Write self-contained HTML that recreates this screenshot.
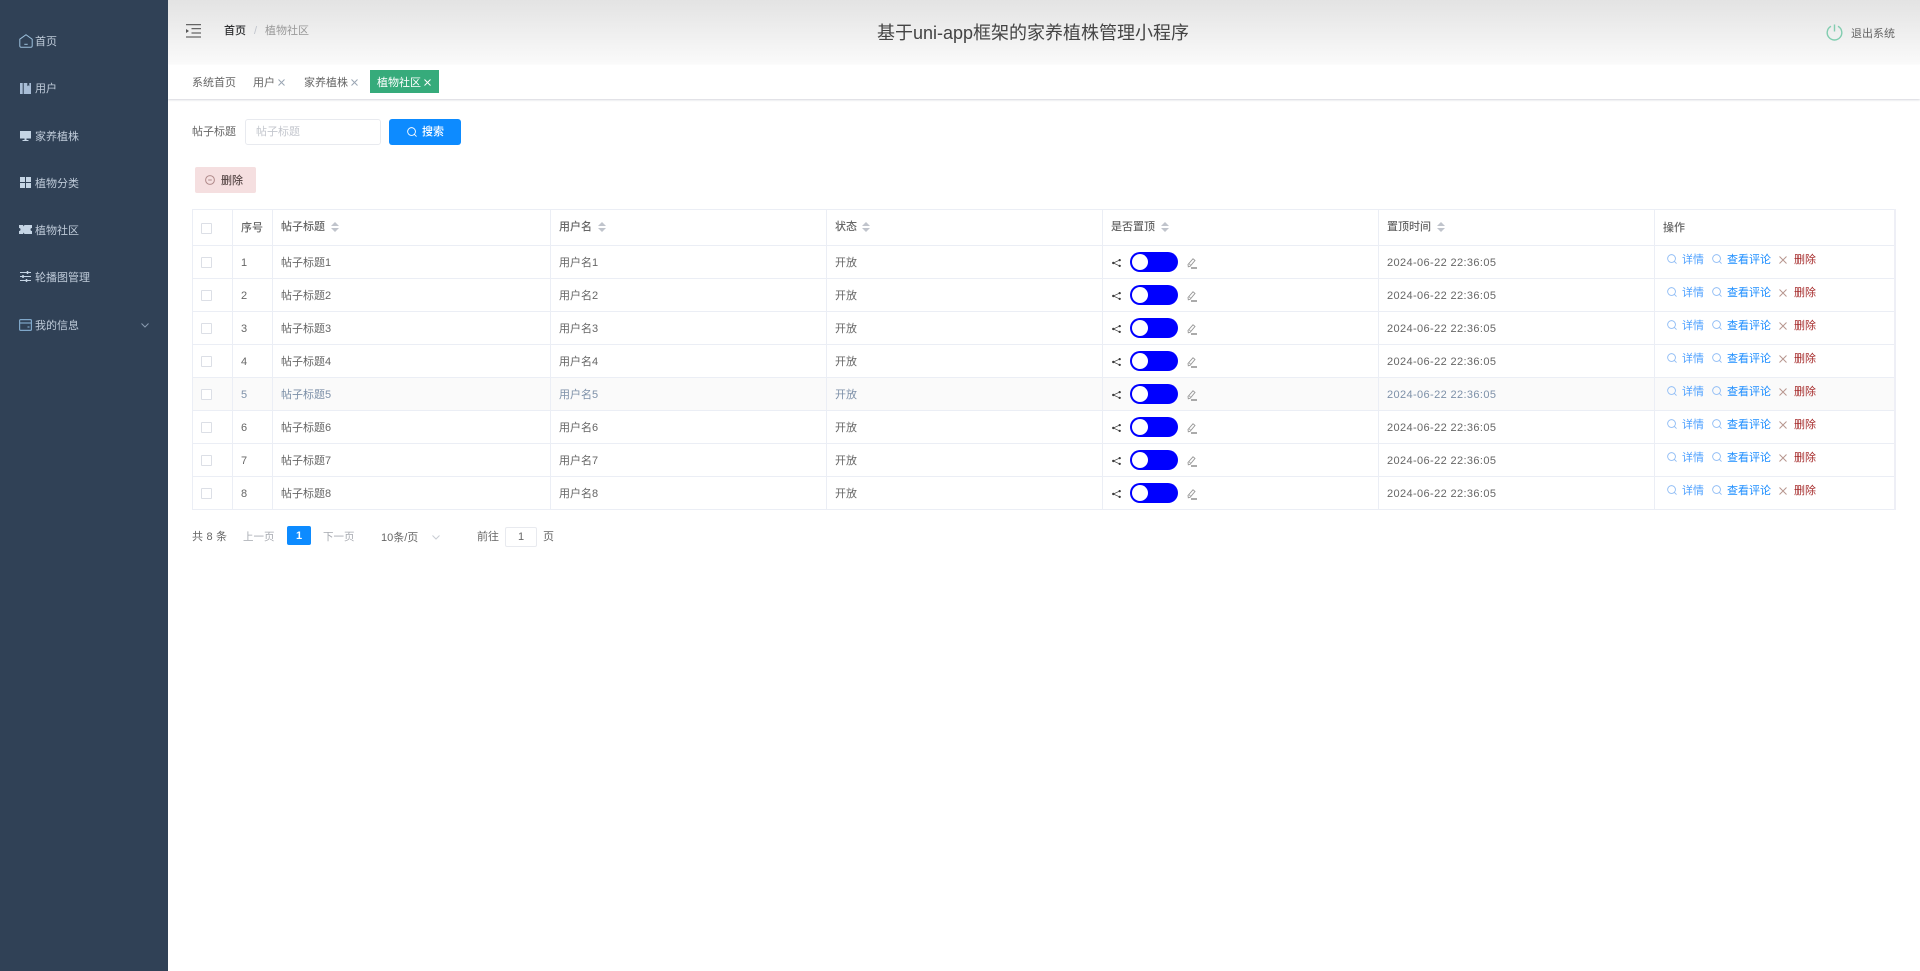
<!DOCTYPE html>
<html lang="zh-CN">
<head>
<meta charset="utf-8">
<title>基于uni-app框架的家养植株管理小程序</title>
<style>
*{box-sizing:border-box;margin:0;padding:0}
html,body{width:1920px;height:971px;overflow:hidden;background:#fff}
body{font-family:"Liberation Sans","Noto Sans CJK SC",sans-serif;font-size:11px;color:#666;position:relative}
.a{position:absolute;white-space:nowrap;line-height:14px}
svg{position:absolute;display:block}
#side{position:absolute;left:0;top:0;width:168px;height:971px;background:#304156}
#side .a{left:35px;color:#bfcbd9}
#head{position:absolute;left:168px;top:0;width:1752px;height:64px;background:linear-gradient(#e3e3e3,#fafafa)}
#tags{position:absolute;left:168px;top:65px;width:1752px;height:34px;background:#fff;box-shadow:0 1px 2px rgba(40,50,80,.2)}
.tb{position:absolute;background:#fff}
.hl{position:absolute;left:192px;width:1704px;height:1px;background:#ebeef5}
.vl{position:absolute;top:209px;width:1px;height:301px;background:#ebeef5}
.cb{position:absolute;left:201px;width:11px;height:11px;border:1px solid #dcdfe6;border-radius:1px;background:#fff}
.sw{position:absolute;left:1130px;top:7px;width:48px;height:20px;border-radius:10px;background:#0000ff}
.sw i{position:absolute;left:2px;top:2px;width:16px;height:16px;border-radius:50%;background:#fff}
.th{font-weight:500;color:#666}
.b1{color:#4da0ff}
.b2{color:#1a8cff}
.br{color:#a52a2a}
.r{position:absolute;left:0;width:1920px;height:33px}
.r5 .c{color:#7d90a8}
.d{letter-spacing:.38px}
</style>
</head>
<body>
<svg width="0" height="0" style="left:0;top:0">
<symbol id="sh" viewBox="0 0 9 8"><g fill="#333"><circle cx="1.300" cy="4" r="1.200"/><circle cx="7.700" cy="1.100" r="1.100"/><circle cx="7.700" cy="6.900" r="1.100"/></g><path d="M7.700 1.100 1.300 4l6.400 2.900" fill="none" stroke="#444" stroke-width=".7"/></symbol>
<symbol id="ed" viewBox="0 0 10 11"><path d="M1.300 8.800 1 6.500 6 .8l2 1.600-4.800 5.800z" fill="none" stroke="#999" stroke-width=".9"/><path d="M3.500 7 2 5.700" fill="none" stroke="#999" stroke-width=".7"/><path d="M4 10h6" fill="none" stroke="#444" stroke-width=".9"/></symbol>
<symbol id="se" viewBox="0 0 11 11"><circle cx="5" cy="5" r="4.300" fill="none" stroke="#8fbcf5" stroke-width="1"/><path d="M8 8l2.500 2.500" fill="none" stroke="#8fbcf5" stroke-width="1"/></symbol>
<symbol id="xx" viewBox="0 0 8 8"><path d="M.5.500l7 7M7.500.500l-7 7" fill="none" stroke="#b8968f"/></symbol>
<symbol id="so" viewBox="0 0 8 10"><path d="M4 0l4 4H0zM0 6h8l-4 4z" fill="#c0c4cc"/></symbol>
</svg>

<div id="side">
<svg style="left:19px;top:34px" width="14" height="14" viewBox="0 0 14 14" fill="none" stroke="#9cc0dc" stroke-width="1"><path d="M.8 5.200 7 .7l6.200 4.500V12a1.200 1.200 0 0 1-1.200 1.200H2A1.200 1.200 0 0 1 .8 12z"/><path d="M5.300 10.300h3.400"/></svg>
<div class="a" style="top:35px">首页</div>
<svg style="left:20px;top:83px" width="11" height="11" viewBox="0 0 11 11" fill="#a8bdd6"><path d="M0 0h2.700v11H0zM3.700 0h3.600v3.200l1-.9 1 .9V0H11v11H3.700z"/></svg>
<div class="a" style="top:82px">用户</div>
<svg style="left:20px;top:131px" width="11" height="10" viewBox="0 0 11 10" fill="#c5d5e5"><path d="M0 0h11v7.500H0zM4.500 7.500h2V9H8.500v1h-6V9h2z"/></svg>
<div class="a" style="top:130px">家养植株</div>
<svg style="left:20px;top:177px" width="11" height="11" viewBox="0 0 11 11" fill="#c5d5e5"><rect width="5" height="5"/><rect x="6" width="5" height="5"/><rect y="6" width="5" height="5"/><rect x="6" y="6" width="5" height="5"/></svg>
<div class="a" style="top:177px">植物分类</div>
<svg style="left:19px;top:225px" width="13" height="9" viewBox="0 0 13 9" fill="#c5d5e5"><path d="M0 0h4l.7 1.500L5.400 0H13v3a1.500 1.500 0 0 0 0 3v3H5.400l-.7-1.500L4 9H0V6a1.500 1.500 0 0 0 0-3z"/></svg>
<div class="a" style="top:224px">植物社区</div>
<svg style="left:20px;top:271px" width="11" height="11" viewBox="0 0 11 11" fill="none" stroke="#c5d5e5" stroke-width="1"><path d="M0 1.500h11M0 5.500h11M0 9.500h11"/><path d="M7.500 0v3M3 4v3M6.500 8v3" stroke-width="1.500"/></svg>
<div class="a" style="top:271px">轮播图管理</div>
<svg style="left:19px;top:319px" width="13" height="12" viewBox="0 0 13 12" fill="none" stroke="#7fa7c9" stroke-width="1.200"><rect x=".6" y=".6" width="11.800" height="10.800" rx="1"/><path d="M.6 4h11.800"/><path d="M8.500 8h2"/></svg>
<div class="a" style="top:319px">我的信息</div>
<svg style="left:141px;top:323px" width="8" height="5" viewBox="0 0 8 5" fill="none" stroke="#8a9bb0" stroke-width="1"><path d="M.5.500 4 4 7.500.500"/></svg>
</div>

<div id="head"></div>
<svg style="left:186px;top:24px" width="15" height="14" viewBox="0 0 15 14" fill="none" stroke="#666" stroke-width="1.200"><path d="M0 .6h15M5.500 4.600H15M5.500 9H15M0 13h15"/><path d="M0 5v4l3-2z" fill="#555" stroke="none"/></svg>
<div class="a" style="left:224px;top:24px;font-weight:500;color:#303133">首页</div>
<div class="a" style="left:254px;top:24px;color:#c0c4cc">/</div>
<div class="a" style="left:265px;top:24px;color:#999">植物社区</div>
<div class="a" style="left:877px;top:21px;font-size:18px;line-height:24px;color:#444">基于uni-app框架的家养植株管理小程序</div>
<svg style="left:1826px;top:24px" width="17" height="17" viewBox="0 0 17 17" fill="none" stroke="#82cdb0" stroke-width="1.400"><path d="M5 2.300a7.300 7.300 0 1 0 7 0"/><path d="M8.500.5v7"/></svg>
<div class="a" style="left:1851px;top:27px;color:#666">退出系统</div>

<div id="tags"></div>
<div class="a" style="left:192px;top:76px;color:#666">系统首页</div>
<div class="a" style="left:253px;top:76px;color:#666">用户</div>
<svg style="left:278px;top:79px" width="7" height="7" viewBox="0 0 7 7" stroke="#9aa5b3" fill="none"><path d="M.5.500l6 6M6.500.500l-6 6"/></svg>
<div class="a" style="left:304px;top:76px;color:#666">家养植株</div>
<svg style="left:351px;top:79px" width="7" height="7" viewBox="0 0 7 7" stroke="#9aa5b3" fill="none"><path d="M.5.500l6 6M6.500.500l-6 6"/></svg>
<div class="tb" style="left:370px;top:70px;width:69px;height:23px;background:#36ab7b"></div>
<div class="a" style="left:377px;top:76px;color:#fff">植物社区</div>
<svg style="left:424px;top:79px" width="7" height="7" viewBox="0 0 7 7" stroke="#fff" fill="none"><path d="M.5.500l6 6M6.500.500l-6 6"/></svg>

<div class="a" style="left:192px;top:125px">帖子标题</div>
<div class="tb" style="left:245px;top:119px;width:136px;height:26px;border:1px solid #e8eaef;border-radius:3px"></div>
<div class="a" style="left:256px;top:125px;color:#c4c7ce">帖子标题</div>
<div class="tb" style="left:389px;top:119px;width:72px;height:26px;background:#0d8bff;border-radius:3px"></div>
<svg style="left:407px;top:127px" width="10" height="10" viewBox="0 0 11 11" fill="none" stroke="#fff"><circle cx="5" cy="5" r="4.300"/><path d="M8 8l2.500 2.500"/></svg>
<div class="a" style="left:422px;top:125px;color:#fff;font-weight:500">搜索</div>

<div class="tb" style="left:195px;top:167px;width:61px;height:26px;background:#f5dfe0;border-radius:2px"></div>
<svg style="left:205px;top:175px" width="10" height="10" viewBox="0 0 10 10" fill="none" stroke="#b08a8a"><circle cx="5" cy="5" r="4.400"/><path d="M3.200 5h3.600"/></svg>
<div class="a" style="left:221px;top:174px;color:#5a4a4a;font-weight:500">删除</div>

<!-- table -->
<div class="tb" style="left:193px;top:378px;width:1701px;height:32px;background:#fafafa"></div>
<div class="hl" style="top:209px"></div><div class="hl" style="top:245px"></div><div class="hl" style="top:278px"></div><div class="hl" style="top:311px"></div><div class="hl" style="top:344px"></div><div class="hl" style="top:377px"></div><div class="hl" style="top:410px"></div><div class="hl" style="top:443px"></div><div class="hl" style="top:476px"></div><div class="hl" style="top:509px"></div>
<div class="vl" style="left:192px"></div><div class="vl" style="left:232px"></div><div class="vl" style="left:272px"></div><div class="vl" style="left:550px"></div><div class="vl" style="left:826px"></div><div class="vl" style="left:1102px"></div><div class="vl" style="left:1378px"></div><div class="vl" style="left:1654px"></div><div class="vl" style="left:1894px;width:2px;background:#eeeff6"></div>

<div class="cb" style="top:223px"></div>
<div class="a th" style="left:241px;top:221px">序号</div>
<div class="a th" style="left:281px;top:220px">帖子标题</div>
<svg style="left:331px;top:222px" width="8" height="10"><use href="#so"/></svg>
<div class="a th" style="left:559px;top:220px">用户名</div>
<svg style="left:598px;top:222px" width="8" height="10"><use href="#so"/></svg>
<div class="a th" style="left:835px;top:220px">状态</div>
<svg style="left:862px;top:222px" width="8" height="10"><use href="#so"/></svg>
<div class="a th" style="left:1111px;top:220px">是否置顶</div>
<svg style="left:1161px;top:222px" width="8" height="10"><use href="#so"/></svg>
<div class="a th" style="left:1387px;top:220px">置顶时间</div>
<svg style="left:1437px;top:222px" width="8" height="10"><use href="#so"/></svg>
<div class="a th" style="left:1663px;top:221px">操作</div>

<div class="r" style="top:245px"><div class="cb" style="top:12px"></div><div class="a c" style="left:241px;top:11px">1</div><div class="a c" style="left:281px;top:11px">帖子标题1</div><div class="a c" style="left:559px;top:11px">用户名1</div><div class="a c" style="left:835px;top:11px">开放</div><svg style="left:1112px;top:14px" width="9" height="8"><use href="#sh"/></svg><div class="sw"><i></i></div><svg style="left:1187px;top:13px" width="10" height="11"><use href="#ed"/></svg><div class="a c d" style="left:1387px;top:11px">2024-06-22 22:36:05</div><svg style="left:1667px;top:9px" width="10" height="10"><use href="#se"/></svg><div class="a b1" style="left:1682px;top:8px">详情</div><svg style="left:1712px;top:9px" width="10" height="10"><use href="#se"/></svg><div class="a b2" style="left:1727px;top:8px">查看评论</div><svg style="left:1779px;top:11px" width="8" height="8"><use href="#xx"/></svg><div class="a br" style="left:1794px;top:8px">删除</div></div>

<div class="r" style="top:278px"><div class="cb" style="top:12px"></div><div class="a c" style="left:241px;top:11px">2</div><div class="a c" style="left:281px;top:11px">帖子标题2</div><div class="a c" style="left:559px;top:11px">用户名2</div><div class="a c" style="left:835px;top:11px">开放</div><svg style="left:1112px;top:14px" width="9" height="8"><use href="#sh"/></svg><div class="sw"><i></i></div><svg style="left:1187px;top:13px" width="10" height="11"><use href="#ed"/></svg><div class="a c d" style="left:1387px;top:11px">2024-06-22 22:36:05</div><svg style="left:1667px;top:9px" width="10" height="10"><use href="#se"/></svg><div class="a b1" style="left:1682px;top:8px">详情</div><svg style="left:1712px;top:9px" width="10" height="10"><use href="#se"/></svg><div class="a b2" style="left:1727px;top:8px">查看评论</div><svg style="left:1779px;top:11px" width="8" height="8"><use href="#xx"/></svg><div class="a br" style="left:1794px;top:8px">删除</div></div>

<div class="r" style="top:311px"><div class="cb" style="top:12px"></div><div class="a c" style="left:241px;top:11px">3</div><div class="a c" style="left:281px;top:11px">帖子标题3</div><div class="a c" style="left:559px;top:11px">用户名3</div><div class="a c" style="left:835px;top:11px">开放</div><svg style="left:1112px;top:14px" width="9" height="8"><use href="#sh"/></svg><div class="sw"><i></i></div><svg style="left:1187px;top:13px" width="10" height="11"><use href="#ed"/></svg><div class="a c d" style="left:1387px;top:11px">2024-06-22 22:36:05</div><svg style="left:1667px;top:9px" width="10" height="10"><use href="#se"/></svg><div class="a b1" style="left:1682px;top:8px">详情</div><svg style="left:1712px;top:9px" width="10" height="10"><use href="#se"/></svg><div class="a b2" style="left:1727px;top:8px">查看评论</div><svg style="left:1779px;top:11px" width="8" height="8"><use href="#xx"/></svg><div class="a br" style="left:1794px;top:8px">删除</div></div>

<div class="r" style="top:344px"><div class="cb" style="top:12px"></div><div class="a c" style="left:241px;top:11px">4</div><div class="a c" style="left:281px;top:11px">帖子标题4</div><div class="a c" style="left:559px;top:11px">用户名4</div><div class="a c" style="left:835px;top:11px">开放</div><svg style="left:1112px;top:14px" width="9" height="8"><use href="#sh"/></svg><div class="sw"><i></i></div><svg style="left:1187px;top:13px" width="10" height="11"><use href="#ed"/></svg><div class="a c d" style="left:1387px;top:11px">2024-06-22 22:36:05</div><svg style="left:1667px;top:9px" width="10" height="10"><use href="#se"/></svg><div class="a b1" style="left:1682px;top:8px">详情</div><svg style="left:1712px;top:9px" width="10" height="10"><use href="#se"/></svg><div class="a b2" style="left:1727px;top:8px">查看评论</div><svg style="left:1779px;top:11px" width="8" height="8"><use href="#xx"/></svg><div class="a br" style="left:1794px;top:8px">删除</div></div>

<div class="r r5" style="top:377px"><div class="cb" style="top:12px"></div><div class="a c" style="left:241px;top:11px">5</div><div class="a c" style="left:281px;top:11px">帖子标题5</div><div class="a c" style="left:559px;top:11px">用户名5</div><div class="a c" style="left:835px;top:11px">开放</div><svg style="left:1112px;top:14px" width="9" height="8"><use href="#sh"/></svg><div class="sw"><i></i></div><svg style="left:1187px;top:13px" width="10" height="11"><use href="#ed"/></svg><div class="a c d" style="left:1387px;top:11px">2024-06-22 22:36:05</div><svg style="left:1667px;top:9px" width="10" height="10"><use href="#se"/></svg><div class="a b1" style="left:1682px;top:8px">详情</div><svg style="left:1712px;top:9px" width="10" height="10"><use href="#se"/></svg><div class="a b2" style="left:1727px;top:8px">查看评论</div><svg style="left:1779px;top:11px" width="8" height="8"><use href="#xx"/></svg><div class="a br" style="left:1794px;top:8px">删除</div></div>

<div class="r" style="top:410px"><div class="cb" style="top:12px"></div><div class="a c" style="left:241px;top:11px">6</div><div class="a c" style="left:281px;top:11px">帖子标题6</div><div class="a c" style="left:559px;top:11px">用户名6</div><div class="a c" style="left:835px;top:11px">开放</div><svg style="left:1112px;top:14px" width="9" height="8"><use href="#sh"/></svg><div class="sw"><i></i></div><svg style="left:1187px;top:13px" width="10" height="11"><use href="#ed"/></svg><div class="a c d" style="left:1387px;top:11px">2024-06-22 22:36:05</div><svg style="left:1667px;top:9px" width="10" height="10"><use href="#se"/></svg><div class="a b1" style="left:1682px;top:8px">详情</div><svg style="left:1712px;top:9px" width="10" height="10"><use href="#se"/></svg><div class="a b2" style="left:1727px;top:8px">查看评论</div><svg style="left:1779px;top:11px" width="8" height="8"><use href="#xx"/></svg><div class="a br" style="left:1794px;top:8px">删除</div></div>

<div class="r" style="top:443px"><div class="cb" style="top:12px"></div><div class="a c" style="left:241px;top:11px">7</div><div class="a c" style="left:281px;top:11px">帖子标题7</div><div class="a c" style="left:559px;top:11px">用户名7</div><div class="a c" style="left:835px;top:11px">开放</div><svg style="left:1112px;top:14px" width="9" height="8"><use href="#sh"/></svg><div class="sw"><i></i></div><svg style="left:1187px;top:13px" width="10" height="11"><use href="#ed"/></svg><div class="a c d" style="left:1387px;top:11px">2024-06-22 22:36:05</div><svg style="left:1667px;top:9px" width="10" height="10"><use href="#se"/></svg><div class="a b1" style="left:1682px;top:8px">详情</div><svg style="left:1712px;top:9px" width="10" height="10"><use href="#se"/></svg><div class="a b2" style="left:1727px;top:8px">查看评论</div><svg style="left:1779px;top:11px" width="8" height="8"><use href="#xx"/></svg><div class="a br" style="left:1794px;top:8px">删除</div></div>

<div class="r" style="top:476px"><div class="cb" style="top:12px"></div><div class="a c" style="left:241px;top:11px">8</div><div class="a c" style="left:281px;top:11px">帖子标题8</div><div class="a c" style="left:559px;top:11px">用户名8</div><div class="a c" style="left:835px;top:11px">开放</div><svg style="left:1112px;top:14px" width="9" height="8"><use href="#sh"/></svg><div class="sw"><i></i></div><svg style="left:1187px;top:13px" width="10" height="11"><use href="#ed"/></svg><div class="a c d" style="left:1387px;top:11px">2024-06-22 22:36:05</div><svg style="left:1667px;top:9px" width="10" height="10"><use href="#se"/></svg><div class="a b1" style="left:1682px;top:8px">详情</div><svg style="left:1712px;top:9px" width="10" height="10"><use href="#se"/></svg><div class="a b2" style="left:1727px;top:8px">查看评论</div><svg style="left:1779px;top:11px" width="8" height="8"><use href="#xx"/></svg><div class="a br" style="left:1794px;top:8px">删除</div></div>

<!-- pagination -->
<div class="a" style="left:192px;top:530px;letter-spacing:.2px">共 8 条</div>
<div class="a" style="left:243px;top:530px;color:#a6a9b0;font-size:10.500px">上一页</div>
<div class="tb" style="left:287px;top:526px;width:24px;height:19px;background:#0d8bff;border-radius:2px"></div>
<div class="a" style="left:287px;width:24px;text-align:center;top:529px;color:#fff;font-weight:bold">1</div>
<div class="a" style="left:323px;top:530px;color:#a6a9b0;font-size:10.500px">下一页</div>
<div class="a" style="left:381px;top:531px">10条/页</div>
<svg style="left:432px;top:535px" width="8" height="5" viewBox="0 0 8 5" fill="none" stroke="#c8ccd3"><path d="M.5.500 4 4 7.500.500"/></svg>
<div class="a" style="left:477px;top:530px">前往</div>
<div class="tb" style="left:505px;top:527px;width:32px;height:20px;border:1px solid #e8eaef;border-radius:2px"></div>
<div class="a" style="left:505px;width:32px;text-align:center;top:530px">1</div>
<div class="a" style="left:543px;top:530px">页</div>
</body>
</html>
